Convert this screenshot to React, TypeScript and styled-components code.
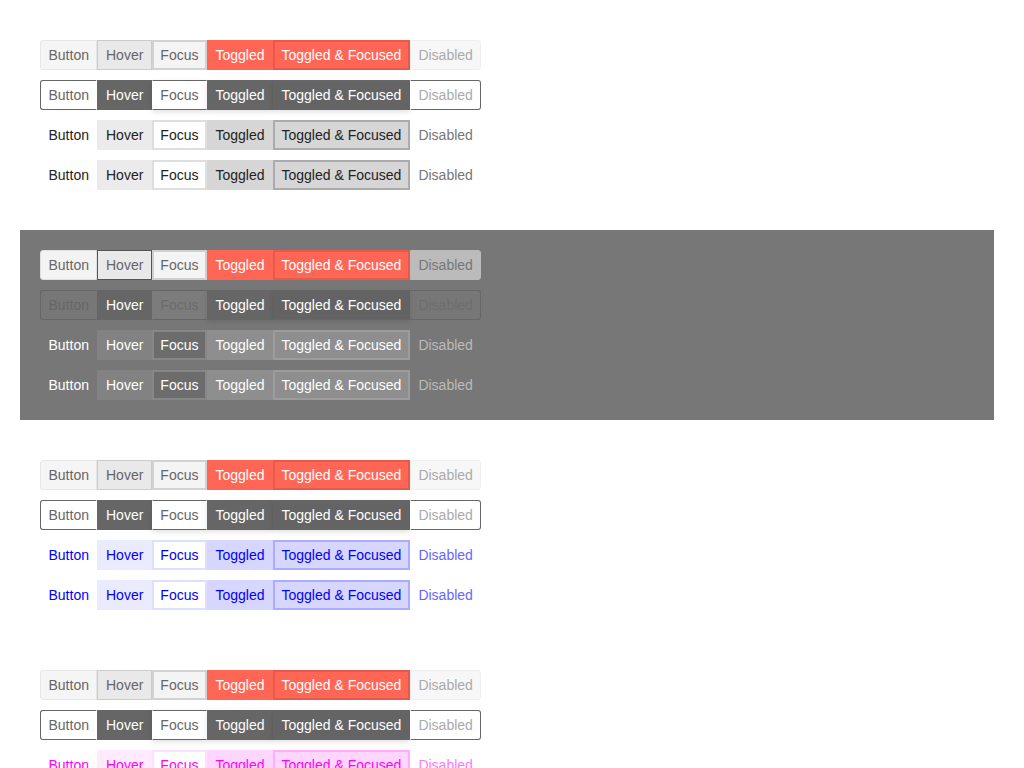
import React from "react";
import styled, { createGlobalStyle } from "styled-components";

const Global = createGlobalStyle`
  html, body { margin: 0; padding: 0; background: #fff; }
  body { font-family: "Liberation Sans", Arial, sans-serif; }
`;

type State = "normal" | "hover" | "focus" | "toggled" | "tf" | "disabled";
interface Look {
  bg: string;
  color: string;
  border: string;
  bw?: number;
  shadow?: string;
}
type Palette = Record<State, Look>;

const STATES: { key: State; label: string }[] = [
  { key: "normal", label: "Button" },
  { key: "hover", label: "Hover" },
  { key: "focus", label: "Focus" },
  { key: "toggled", label: "Toggled" },
  { key: "tf", label: "Toggled & Focused" },
  { key: "disabled", label: "Disabled" },
];

const solidLight: Palette = {
  normal: { bg: "#f5f5f5", color: "#666", border: "#e6e6e6" },
  hover: { bg: "#e9e9e9", color: "#666", border: "#cccccc" },
  focus: { bg: "#f4f4f4", color: "#666", border: "#d2d2d2", bw: 2 },
  toggled: { bg: "#ff6655", color: "#fff", border: "#ff6655" },
  tf: { bg: "#ff6655", color: "#fff", border: "#e65a4c", bw: 2 },
  disabled: { bg: "#f7f7f7", color: "#aaa", border: "#efefef" },
};

const solidDark: Palette = {
  normal: { bg: "#f3f3f3", color: "#666", border: "#e0e0e0" },
  hover: { bg: "#e9e9e9", color: "#666", border: "#555" },
  focus: { bg: "#f4f4f4", color: "#666", border: "#cfcfcf", bw: 2 },
  toggled: { bg: "#ff6655", color: "#fff", border: "#ff6655" },
  tf: { bg: "#ff6655", color: "#fff", border: "#e65a4c", bw: 2 },
  disabled: { bg: "#bbbbbb", color: "#777", border: "#bbbbbb" },
};

const outlineLight: Palette = {
  normal: { bg: "#fff", color: "#666", border: "#fff" },
  hover: { bg: "#666", color: "#fff", border: "#666" },
  focus: { bg: "#fff", color: "#666", border: "#fff", shadow: "0 2px 5px rgba(0,0,0,0.12)" },
  toggled: { bg: "#666", color: "#fff", border: "#666", shadow: "0 2px 5px rgba(0,0,0,0.12)" },
  tf: { bg: "#646464", color: "#fff", border: "#646464", shadow: "0 2px 5px rgba(0,0,0,0.12)" },
  disabled: { bg: "#fff", color: "#aaa", border: "#fff" },
};

const outlineDark: Palette = {
  normal: { bg: "transparent", color: "#666", border: "transparent" },
  hover: { bg: "#666", color: "#fff", border: "#666" },
  focus: { bg: "#7c7c7c", color: "#6a6a6a", border: "#7c7c7c" },
  toggled: { bg: "#666", color: "#fff", border: "#666", shadow: "0 2px 5px rgba(0,0,0,0.1)" },
  tf: { bg: "#636363", color: "#fff", border: "#636363", shadow: "0 2px 5px rgba(0,0,0,0.1)" },
  disabled: { bg: "transparent", color: "#6e6e6e", border: "transparent" },
};

const flat = (rgb: string, text: string, disabled: string): Palette => ({
  normal: { bg: "transparent", color: text, border: "transparent" },
  hover: { bg: `rgba(${rgb},0.08)`, color: text, border: "transparent" },
  focus: { bg: "#fff", color: text, border: `rgba(${rgb},0.13)`, bw: 2 },
  toggled: { bg: `rgba(${rgb},0.16)`, color: text, border: "transparent" },
  tf: { bg: `rgba(${rgb},0.16)`, color: text, border: `rgba(${rgb},0.2)`, bw: 2 },
  disabled: { bg: "transparent", color: disabled, border: "transparent" },
});

const flatGray = flat("0,0,0", "#222", "#777");
const flatBlue = flat("0,0,255", "#0000ff", "#6666ff");
const flatMagenta = flat("255,0,255", "#ff00ff", "#ff77ff");

const flatDark: Palette = {
  normal: { bg: "transparent", color: "#fff", border: "transparent" },
  hover: { bg: "#828282", color: "#fff", border: "#828282" },
  focus: { bg: "#6c6c6c", color: "#fff", border: "#878787", bw: 2 },
  toggled: { bg: "#8e8e8e", color: "#fff", border: "#8e8e8e" },
  tf: { bg: "#8e8e8e", color: "#fff", border: "#9c9c9c", bw: 2 },
  disabled: { bg: "transparent", color: "#bbb", border: "transparent" },
};

const Page = styled.main`
  display: flex;
  flex-direction: column;
  gap: 20px;
  padding: 20px 0 20px 20px;
  width: 974px;
`;

const Section = styled.section<{ $dark?: boolean }>`
  display: flex;
  flex-direction: column;
  gap: 10px;
  padding: 20px;
  background: ${(p) => (p.$dark ? "#777777" : "transparent")};
`;

const Group = styled.div<{ $frame?: string; $radius: number }>`
  display: flex;
  width: max-content;
  height: 30px;
  & > button:first-child {
    border-top-left-radius: ${(p) => p.$radius}px;
    border-bottom-left-radius: ${(p) => p.$radius}px;
  }
  & > button:last-child {
    border-top-right-radius: ${(p) => p.$radius}px;
    border-bottom-right-radius: ${(p) => p.$radius}px;
  }
  ${(p) =>
    p.$frame
      ? `
    & > button { border-top-color: ${p.$frame}; border-bottom-color: ${p.$frame}; border-top-width: 1px; border-bottom-width: 1px; }
    & > button:first-child { border-left-color: ${p.$frame}; }
    & > button:last-child { border-right-color: ${p.$frame}; }
  `
      : ""}
`;

const Btn = styled.button<{ $look: Look }>`
  box-sizing: border-box;
  height: 30px;
  margin: 0;
  padding: 0 ${(p) => 8.5 - (p.$look.bw ?? 1)}px;
  font-family: "Liberation Sans", Arial, sans-serif;
  font-size: 14px;
  line-height: 1;
  white-space: nowrap;
  cursor: pointer;
  background: ${(p) => p.$look.bg};
  color: ${(p) => p.$look.color};
  border: ${(p) => p.$look.bw ?? 1}px solid ${(p) => p.$look.border};
  box-shadow: ${(p) => p.$look.shadow ?? "none"};
  position: relative;
  border-radius: 0;
  &:focus { outline: none; }
`;

const Row: React.FC<{ palette: Palette; frame?: string; radius?: number }> = ({
  palette,
  frame,
  radius = 0,
}) => (
  <Group $frame={frame} $radius={radius}>
    {STATES.map((s) => (
      <Btn key={s.key} $look={palette[s.key]} tabIndex={-1}>
        {s.label}
      </Btn>
    ))}
  </Group>
);

export default function App() {
  return (
    <>
      <Global />
      <Page>
        <Section>
          <Row palette={solidLight} radius={3} />
          <Row palette={outlineLight} frame="#666" radius={3} />
          <Row palette={flatGray} />
          <Row palette={flatGray} />
        </Section>
        <Section $dark>
          <Row palette={solidDark} radius={3} />
          <Row palette={outlineDark} frame="#666" radius={3} />
          <Row palette={flatDark} />
          <Row palette={flatDark} />
        </Section>
        <Section>
          <Row palette={solidLight} radius={3} />
          <Row palette={outlineLight} frame="#666" radius={3} />
          <Row palette={flatBlue} />
          <Row palette={flatBlue} />
        </Section>
        <Section>
          <Row palette={solidLight} radius={3} />
          <Row palette={outlineLight} frame="#666" radius={3} />
          <Row palette={flatMagenta} />
          <Row palette={flatMagenta} />
        </Section>
      </Page>
    </>
  );
}
